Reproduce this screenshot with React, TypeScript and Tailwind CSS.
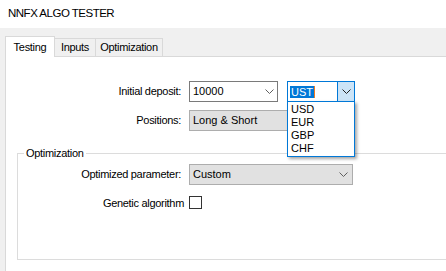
import React from "react"

function Chevron({ className }: { className?: string }) {
  return (
    <svg width="9" height="5" viewBox="0 0 9 5" className={className}>
      <path d="M0.5 0.5 L4.5 4.5 L8.5 0.5" fill="none" stroke="currentColor" strokeWidth="1" />
    </svg>
  )
}

const currencies = ["USD", "EUR", "GBP", "CHF"]

export default function App() {
  return (
    <div className="flex h-[271px] w-[446px] flex-col overflow-hidden bg-[#f0f0f0] font-['Liberation_Sans',Arial,sans-serif] text-[11px] text-black">
      {/* Title */}
      <div className="flex h-[28px] shrink-0 items-center bg-white px-[8px] text-[11.5px] tracking-[-0.5px]">
        NNFX ALGO TESTER
      </div>

      <div className="flex flex-1 flex-col pl-[5px] pt-[8px]">
        {/* Tabs */}
        <div className="relative z-10 flex h-[20px] items-end">
          <div className="-mb-px flex h-[21px] w-[50px] items-center justify-center border border-b-0 border-[#d9d9d9] bg-white tracking-[-0.3px]">
            Testing
          </div>
          <div className="flex h-[18px] w-[41px] items-center justify-center border-r border-t border-[#d9d9d9] tracking-[-0.3px]">
            Inputs
          </div>
          <div className="flex h-[18px] w-[67px] items-center justify-center border-r border-t border-[#d9d9d9] tracking-[-0.3px]">
            Optimization
          </div>
        </div>

        {/* Panel */}
        <div className="flex-1 border-l border-t border-[#d9d9d9] bg-white">
          <div className="flex items-center pt-[24px]">
            <div className="w-[175px] text-right tracking-[-0.3px]">Initial deposit:</div>
            <div className="ml-[8px] flex h-[21px] w-[89px] items-center border border-[#7a7a7a] pl-[3px] pr-[3px]">
              <span className="flex-1">10000</span>
              <Chevron className="text-[#606060]" />
            </div>
            <div className="relative z-20 ml-[9px] flex h-[21px] w-[68px] border border-[#0078d7]">
              <div className="flex flex-1 items-center pl-[2px]">
                <span className="bg-[#0078d7] px-px leading-[12px] text-white">UST</span>
                <span className="h-[12px] w-px bg-[#f07a20]" />
              </div>
              <div className="flex w-[17px] items-center justify-center border-l border-[#0078d7] bg-[#cce4f7] text-[#222]">
                <Chevron />
              </div>
              <div className="absolute left-[-1px] top-full w-[68px] border border-[#0078d7] bg-white py-px shadow-[2px_2px_3px_rgba(0,0,0,0.35)]">
                {currencies.map((c) => (
                  <div key={c} className="h-[13px] pl-[3px] leading-[13px]">
                    {c}
                  </div>
                ))}
              </div>
            </div>
          </div>

          <div className="mt-[8px] flex items-center">
            <div className="w-[175px] text-right tracking-[-0.3px]">Positions:</div>
            <div className="ml-[8px] flex h-[21px] w-[166px] items-center border border-[#adadad] bg-[#e1e1e1] pl-[3px] pr-[4px]">
              <span className="flex-1">Long &amp; Short</span>
              <Chevron className="text-[#606060]" />
            </div>
          </div>

          {/* Optimization group */}
          <fieldset className="ml-[11px] mt-[14px] h-[115px] w-[440px] border border-[#dcdcdc]">
            <legend className="ml-[6px] px-[2px] tracking-[-0.3px]">Optimization</legend>
            <div className="mt-[2px] flex items-center">
              <div className="w-[163px] text-right tracking-[-0.3px]">Optimized parameter:</div>
              <div className="ml-[8px] flex h-[21px] w-[164px] items-center border border-[#adadad] bg-[#e1e1e1] pl-[3px] pr-[4px]">
                <span className="flex-1">Custom</span>
                <Chevron className="text-[#606060]" />
              </div>
            </div>
            <div className="mt-[10px] flex items-center">
              <div className="w-[166px] text-right tracking-[-0.3px]">Genetic algorithm</div>
              <div className="ml-[5px] h-[13px] w-[13px] border border-[#333] bg-white" />
            </div>
          </fieldset>
        </div>
      </div>
    </div>
  )
}
